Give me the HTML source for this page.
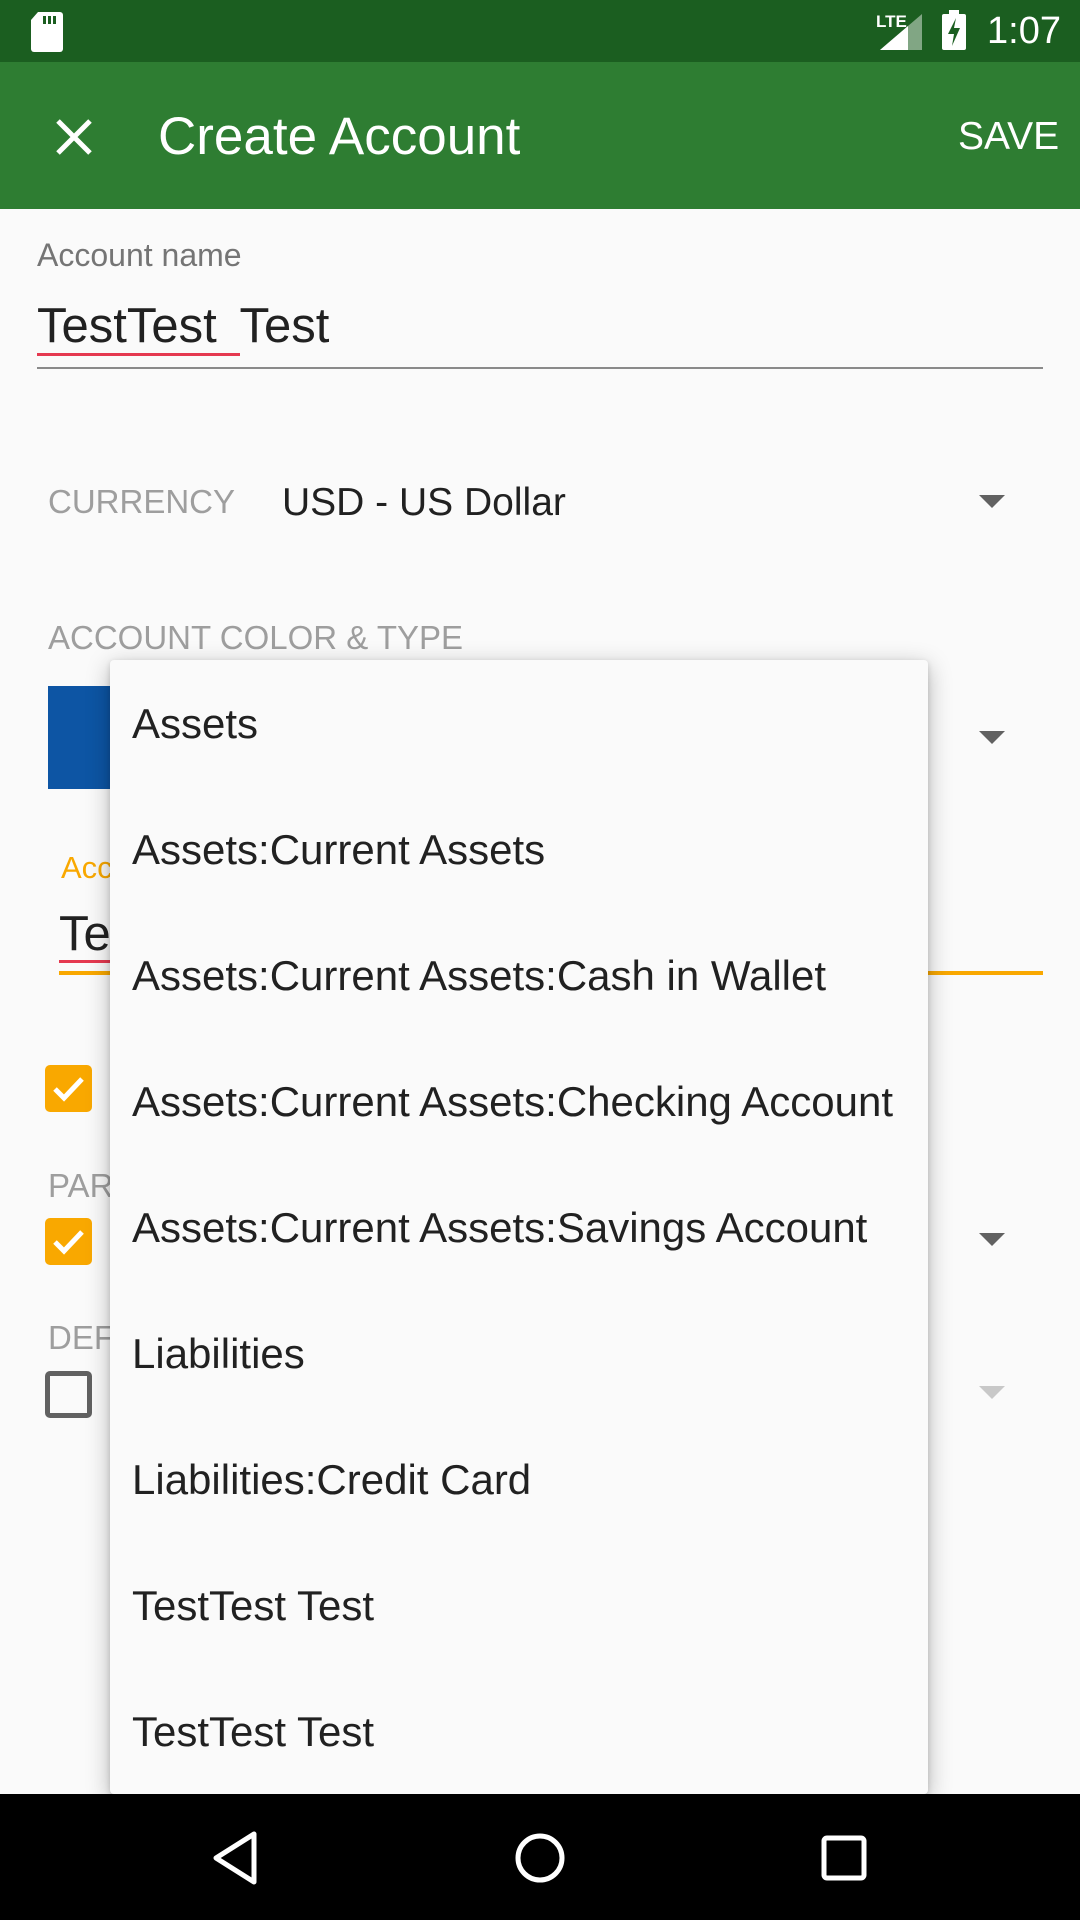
<!DOCTYPE html>
<html><head><meta charset="utf-8"><style>
*{margin:0;padding:0;box-sizing:border-box}
body{width:1080px;height:1920px;position:relative;overflow:hidden;background:#fafafa;font-family:"Liberation Sans",sans-serif}
.a{position:absolute;white-space:nowrap}
.lbl{color:#9e9e9e;font-size:33px}
.item{position:absolute;left:22px;font-size:42px;color:#212121;height:126px;line-height:128px}
.arrow{position:absolute;width:0;height:0;border-left:13px solid transparent;border-right:13px solid transparent;border-top:13px solid #616161}
.cb{position:absolute;left:45px;width:47px;height:47px;border-radius:5px;background:#f9a800}
</style></head><body>
<div class="a" style="left:0;top:0;width:1080px;height:62px;background:#1b5e20"></div>
<svg class="a" style="left:30px;top:12px" width="34" height="40" viewBox="0 0 34 40"><path d="M8 0H30a3 3 0 0 1 3 3V37a3 3 0 0 1-3 3H4a3 3 0 0 1-3-3V8z" fill="#fff"/><rect x="13" y="4" width="3" height="8" fill="#1b5e20"/><rect x="18" y="4" width="3" height="8" fill="#1b5e20"/><rect x="23" y="4" width="3" height="8" fill="#1b5e20"/></svg>
<div class="a" style="left:876px;top:12px;color:#fff;font-size:17px;font-weight:bold">LTE</div>
<svg class="a" style="left:880px;top:14px" width="42" height="36"><polygon points="42,0 42,36 0,36" fill="#fff" opacity=".45"/><polygon points="28,12 28,36 0,36" fill="#fff"/></svg>
<svg class="a" style="left:942px;top:10px" width="24" height="40"><rect x="7" y="0" width="10" height="4" fill="#fff"/><rect x="0" y="4" width="24" height="36" rx="2" fill="#fff"/><path d="M14 8 L6 24 H12 L10 36 L18 18 H12 Z" fill="#1b5e20"/></svg>
<div class="a" style="left:987px;top:10px;color:#fff;font-size:38px">1:07</div>
<div class="a" style="left:0;top:62px;width:1080px;height:147px;background:#2e7d32"></div>
<svg class="a" style="left:55px;top:118px" width="38" height="38"><path d="M3 3L35 35M35 3L3 35" stroke="#fff" stroke-width="5"/></svg>
<div class="a" style="left:158px;top:106px;color:#fff;font-size:53px">Create Account</div>
<div class="a" style="left:958px;top:115px;color:#fff;font-size:39px">SAVE</div>

<div class="a" style="left:37px;top:237px;color:#757575;font-size:32px">Account name</div>
<div class="a" style="left:37px;top:298px;color:#212121;font-size:49px;word-spacing:10px">TestTest Test</div>
<div class="a" style="left:37px;top:353px;width:203px;height:3px;background:#e53950"></div>
<div class="a" style="left:37px;top:367px;width:1006px;height:2px;background:#8a8a8a"></div>

<div class="a lbl" style="left:48px;top:483px">CURRENCY</div>
<div class="a" style="left:282px;top:481px;color:#212121;font-size:39px">USD - US Dollar</div>
<div class="arrow" style="left:979px;top:495px"></div>

<div class="a lbl" style="left:48px;top:619px">ACCOUNT COLOR &amp; TYPE</div>
<div class="a" style="left:48px;top:686px;width:80px;height:103px;background:#0d55a4"></div>
<div class="arrow" style="left:979px;top:731px"></div>

<div class="a" style="left:61px;top:850px;color:#f9a800;font-size:31px">Account</div>
<div class="a" style="left:59px;top:906px;color:#212121;font-size:49px">Te</div>
<div class="a" style="left:59px;top:960px;width:60px;height:3px;background:#e53950"></div>
<div class="a" style="left:59px;top:971px;width:984px;height:4px;background:#f9a800"></div>

<div class="cb" style="top:1065px"></div>
<svg class="a" style="left:45px;top:1065px" width="47" height="47"><path d="M10 24L19 33L37 14" stroke="#fff" stroke-width="5" fill="none"/></svg>
<div class="a lbl" style="left:48px;top:1167px">PARENT</div>
<div class="cb" style="top:1218px"></div>
<svg class="a" style="left:45px;top:1218px" width="47" height="47"><path d="M10 24L19 33L37 14" stroke="#fff" stroke-width="5" fill="none"/></svg>
<div class="arrow" style="left:979px;top:1233px"></div>
<div class="a lbl" style="left:48px;top:1319px">DEFAULT</div>
<div class="a" style="left:45px;top:1371px;width:47px;height:47px;border:5px solid #616161;border-radius:5px"></div>
<div class="arrow" style="left:979px;top:1386px;border-top-color:#c8c8c8"></div>

<div class="a" style="left:110px;top:660px;width:818px;height:1134px;background:#fafafa;border-radius:4px;box-shadow:0 6px 24px rgba(0,0,0,.28),0 2px 6px rgba(0,0,0,.15)">
<div class="item" style="top:0">Assets</div>
<div class="item" style="top:126px">Assets:Current Assets</div>
<div class="item" style="top:252px">Assets:Current Assets:Cash in Wallet</div>
<div class="item" style="top:378px">Assets:Current Assets:Checking Account</div>
<div class="item" style="top:504px">Assets:Current Assets:Savings Account</div>
<div class="item" style="top:630px">Liabilities</div>
<div class="item" style="top:756px">Liabilities:Credit Card</div>
<div class="item" style="top:882px">TestTest Test</div>
<div class="item" style="top:1008px">TestTest Test</div>
</div>

<div class="a" style="left:0;top:1794px;width:1080px;height:126px;background:#000"></div>
<svg class="a" style="left:210px;top:1830px" width="52" height="56"><path d="M44 4V52L6 28Z" stroke="#fff" stroke-width="5" fill="none" stroke-linejoin="round"/></svg>
<svg class="a" style="left:512px;top:1830px" width="56" height="56"><circle cx="28" cy="28" r="22" stroke="#fff" stroke-width="5" fill="none"/></svg>
<svg class="a" style="left:820px;top:1834px" width="48" height="48"><rect x="4" y="4" width="40" height="40" rx="3" stroke="#fff" stroke-width="5" fill="none"/></svg>
</body></html>
